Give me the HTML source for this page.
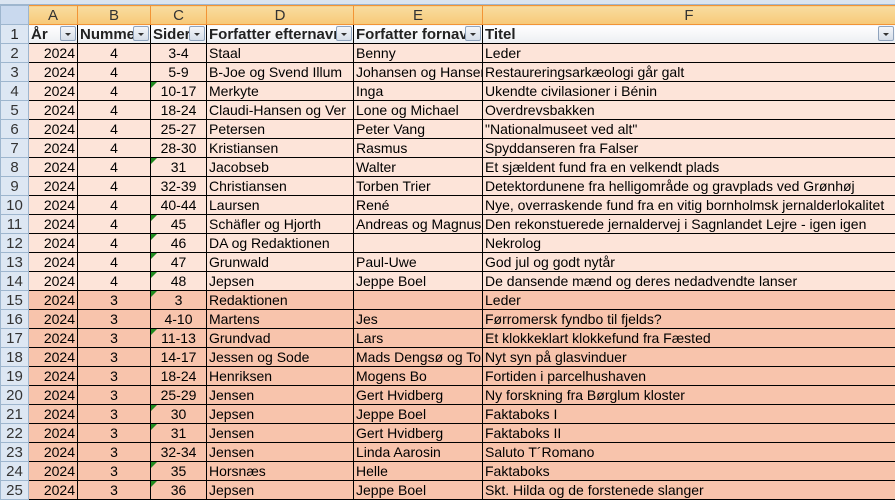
<!DOCTYPE html>
<html><head><meta charset="utf-8"><style>
*{margin:0;padding:0;box-sizing:border-box}
body{width:895px;height:500px;overflow:hidden;background:#fff;font-family:"Liberation Sans",Arial,sans-serif;font-size:14px;color:#000;position:relative}
.top{position:absolute;left:0;top:0;width:895px;height:5px;background:#dbe5f1;border-bottom:1px solid #9eb6ce}
table{position:absolute;left:0;top:5px;width:895px;border-collapse:collapse;table-layout:fixed}
td{height:19px;border:1px solid #000;white-space:nowrap;overflow:hidden;padding:0 2px;line-height:17px;position:relative}
tr.ch td{background:linear-gradient(#f9dcA0,#f7c978);border:1px solid #f29436;text-align:center;color:#333;font-size:15px;height:19px}
tr.ch td.corner{background:#c9d9ee;border:1px solid #9eb6ce}
td.rh{background:#dde7f3;border:1px solid #9eb6ce;text-align:center;color:#333;font-size:15px;padding:0}
tr.h td{background:linear-gradient(#fff,#eceef2);font-weight:bold;color:#222;font-size:15px}
tr.h td.rh{background:#dde7f3;font-weight:normal}
tr.a td{background:#fde4d9}
tr.b td{background:#f8c4ac}
tr.a td.rh,tr.b td.rh{background:#dde7f3}
.r{text-align:right}.c{text-align:center}
.dd{position:absolute;right:1px;top:1px;width:16px;height:15px;border:1px solid #8fa3bd;background:linear-gradient(#f4f6fa,#d5dde8);border-radius:2px}
.dd:after{content:"";position:absolute;left:4px;top:6px;border-left:3px solid transparent;border-right:3px solid transparent;border-top:3px solid #333}
.g:before{content:"";position:absolute;left:0;top:0;border-top:6px solid #1f8a1f;border-right:6px solid transparent}
</style></head><body>
<div class="top"></div>
<table>
<colgroup><col style="width:28px"><col style="width:49px"><col style="width:73px"><col style="width:56px"><col style="width:147px"><col style="width:129px"><col style="width:413px"></colgroup>
<tr class="ch"><td class="corner"></td><td>A</td><td>B</td><td>C</td><td>D</td><td>E</td><td>F</td></tr>
<tr class="h"><td class="rh">1</td><td>År<span class="dd"></span></td><td>Nummer<span class="dd"></span></td><td>Sider<span class="dd"></span></td><td>Forfatter efternavn<span class="dd"></span></td><td>Forfatter fornavn<span class="dd"></span></td><td>Titel<span class="dd"></span></td></tr>
<tr class="a"><td class="rh">2</td><td class="r">2024</td><td class="c">4</td><td class="c">3-4</td><td>Staal</td><td>Benny</td><td>Leder</td></tr>
<tr class="a"><td class="rh">3</td><td class="r">2024</td><td class="c">4</td><td class="c">5-9</td><td>B-Joe og Svend Illum</td><td>Johansen og Hansen</td><td>Restaureringsarkæologi går galt</td></tr>
<tr class="a"><td class="rh">4</td><td class="r">2024</td><td class="c">4</td><td class="c g">10-17</td><td>Merkyte</td><td>Inga</td><td>Ukendte civilasioner i Bénin</td></tr>
<tr class="a"><td class="rh">5</td><td class="r">2024</td><td class="c">4</td><td class="c">18-24</td><td>Claudi-Hansen og Ver</td><td>Lone og Michael</td><td>Overdrevsbakken</td></tr>
<tr class="a"><td class="rh">6</td><td class="r">2024</td><td class="c">4</td><td class="c">25-27</td><td>Petersen</td><td>Peter Vang</td><td>"Nationalmuseet ved alt"</td></tr>
<tr class="a"><td class="rh">7</td><td class="r">2024</td><td class="c">4</td><td class="c">28-30</td><td>Kristiansen</td><td>Rasmus</td><td>Spyddanseren fra Falser</td></tr>
<tr class="a"><td class="rh">8</td><td class="r">2024</td><td class="c">4</td><td class="c g">31</td><td>Jacobseb</td><td>Walter</td><td>Et sjældent fund fra en velkendt plads</td></tr>
<tr class="a"><td class="rh">9</td><td class="r">2024</td><td class="c">4</td><td class="c">32-39</td><td>Christiansen</td><td>Torben Trier</td><td>Detektordunene fra helligområde og gravplads ved Grønhøj</td></tr>
<tr class="a"><td class="rh">10</td><td class="r">2024</td><td class="c">4</td><td class="c">40-44</td><td>Laursen</td><td>René</td><td>Nye, overraskende fund fra en vitig bornholmsk jernalderlokalitet</td></tr>
<tr class="a"><td class="rh">11</td><td class="r">2024</td><td class="c">4</td><td class="c g">45</td><td>Schäfler og Hjorth</td><td>Andreas og Magnus</td><td>Den rekonstuerede jernaldervej i Sagnlandet Lejre - igen igen</td></tr>
<tr class="a"><td class="rh">12</td><td class="r">2024</td><td class="c">4</td><td class="c g">46</td><td>DA og Redaktionen</td><td></td><td>Nekrolog</td></tr>
<tr class="a"><td class="rh">13</td><td class="r">2024</td><td class="c">4</td><td class="c g">47</td><td>Grunwald</td><td>Paul-Uwe</td><td>God jul og godt nytår</td></tr>
<tr class="a"><td class="rh">14</td><td class="r">2024</td><td class="c">4</td><td class="c g">48</td><td>Jepsen</td><td>Jeppe Boel</td><td>De dansende mænd og deres nedadvendte lanser</td></tr>
<tr class="b"><td class="rh">15</td><td class="r">2024</td><td class="c">3</td><td class="c g">3</td><td>Redaktionen</td><td></td><td>Leder</td></tr>
<tr class="b"><td class="rh">16</td><td class="r">2024</td><td class="c">3</td><td class="c">4-10</td><td>Martens</td><td>Jes</td><td>Førromersk fyndbo til fjelds?</td></tr>
<tr class="b"><td class="rh">17</td><td class="r">2024</td><td class="c">3</td><td class="c g">11-13</td><td>Grundvad</td><td>Lars</td><td>Et klokkeklart klokkefund fra Fæsted</td></tr>
<tr class="b"><td class="rh">18</td><td class="r">2024</td><td class="c">3</td><td class="c">14-17</td><td>Jessen og Sode</td><td>Mads Dengsø og Tor</td><td>Nyt syn på glasvinduer</td></tr>
<tr class="b"><td class="rh">19</td><td class="r">2024</td><td class="c">3</td><td class="c">18-24</td><td>Henriksen</td><td>Mogens Bo</td><td>Fortiden i parcelhushaven</td></tr>
<tr class="b"><td class="rh">20</td><td class="r">2024</td><td class="c">3</td><td class="c">25-29</td><td>Jensen</td><td>Gert Hvidberg</td><td>Ny forskning fra Børglum kloster</td></tr>
<tr class="b"><td class="rh">21</td><td class="r">2024</td><td class="c">3</td><td class="c g">30</td><td>Jepsen</td><td>Jeppe Boel</td><td>Faktaboks I</td></tr>
<tr class="b"><td class="rh">22</td><td class="r">2024</td><td class="c">3</td><td class="c g">31</td><td>Jensen</td><td>Gert Hvidberg</td><td>Faktaboks II</td></tr>
<tr class="b"><td class="rh">23</td><td class="r">2024</td><td class="c">3</td><td class="c">32-34</td><td>Jensen</td><td>Linda Aarosin</td><td>Saluto T´Romano</td></tr>
<tr class="b"><td class="rh">24</td><td class="r">2024</td><td class="c">3</td><td class="c g">35</td><td>Horsnæs</td><td>Helle</td><td>Faktaboks</td></tr>
<tr class="b"><td class="rh">25</td><td class="r">2024</td><td class="c">3</td><td class="c g">36</td><td>Jepsen</td><td>Jeppe Boel</td><td>Skt. Hilda og de forstenede slanger</td></tr>
</table>
</body></html>
